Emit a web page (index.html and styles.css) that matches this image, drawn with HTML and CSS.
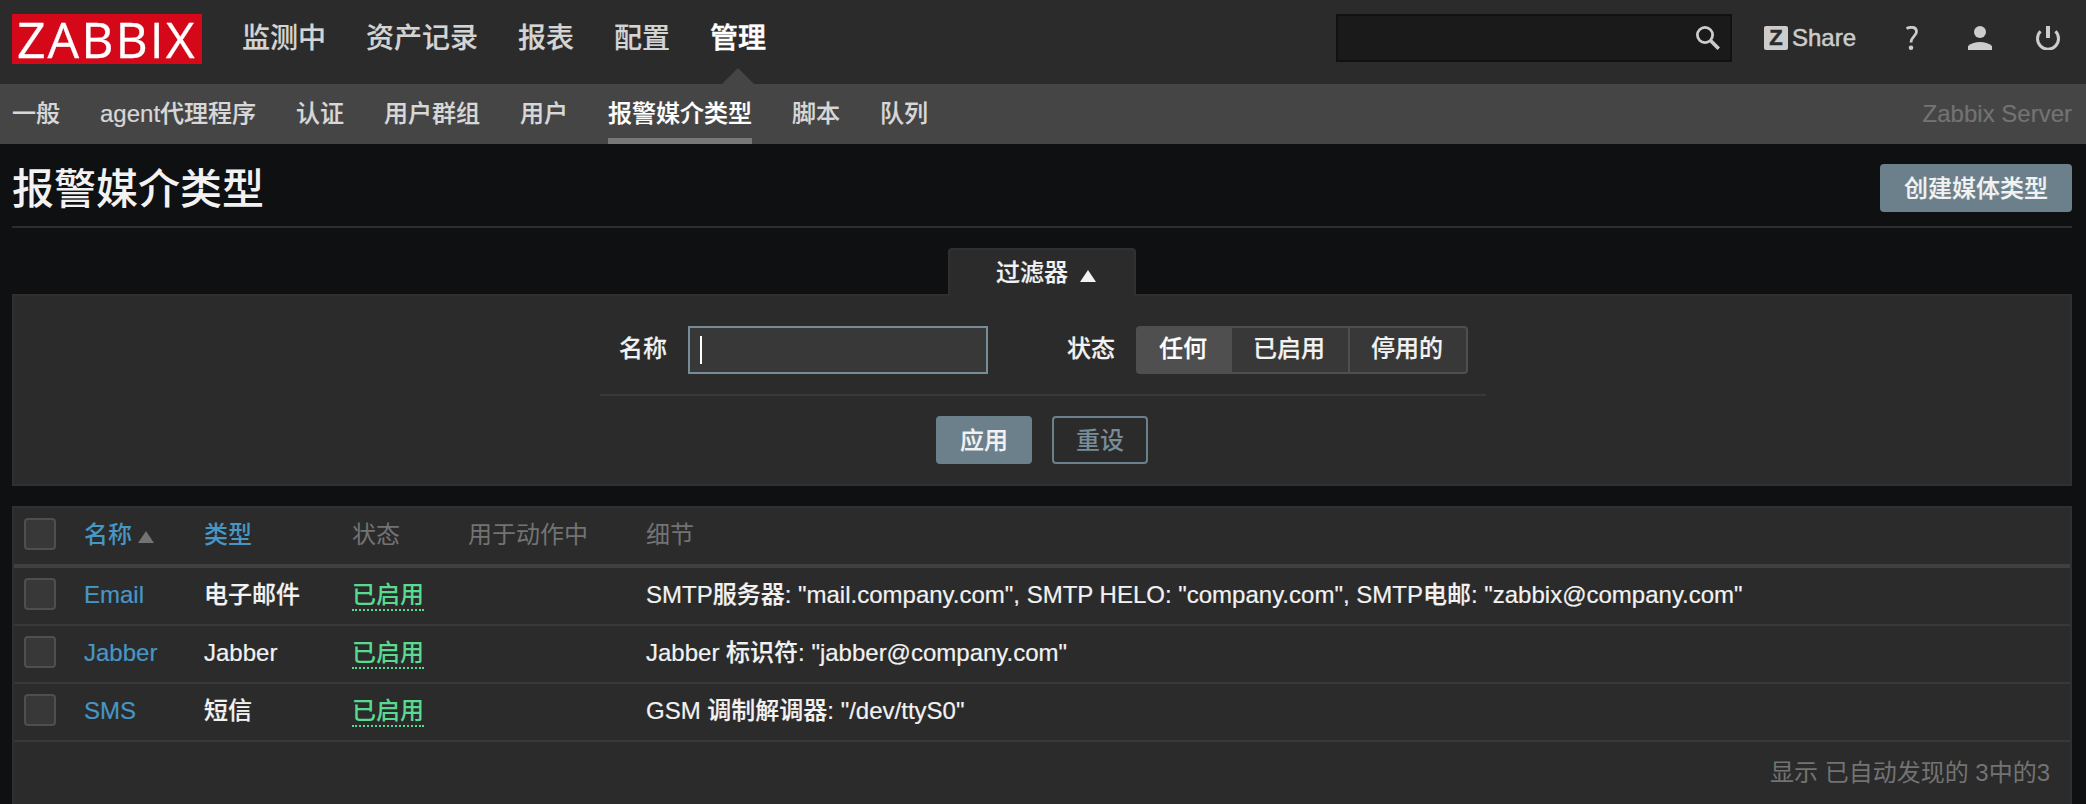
FILE: index.html
```html
<!DOCTYPE html>
<html lang="zh-CN">
<head>
<meta charset="utf-8">
<title>报警媒介类型</title>
<link rel="stylesheet" href="styles.css">
</head>
<body>
<header class="top">
  <a class="logo">ZABBIX</a>
  <nav class="main-nav">
    <a>监测中</a><a>资产记录</a><a>报表</a><a>配置</a><a class="current">管理</a>
  </nav>
  <div class="tools">
    <div class="search"><svg width="24" height="24" viewBox="0 0 24 24" fill="none" stroke="#ccc"><circle cx="9" cy="9" r="7.600" stroke-width="2.800"/><path d="M14.500 14.500L22.700 22.700" stroke-width="3.600"/></svg></div>
    <a class="share"><span class="z">Z</span>Share</a>
    <svg class="help" width="12" height="24" viewBox="0 0 12 24"><path d="M.6 2.600C2 1.700 3.600 1.300 5.500 1.300C8.600 1.300 10.500 3 10.500 5.700C10.500 10 5 10.500 5 16.500" fill="none" stroke="#ccc" stroke-width="2.800"/><circle cx="5" cy="21.700" r="2.300" fill="#ccc"/></svg>
    <svg class="user" width="24" height="24" viewBox="0 0 24 24" fill="#ccc"><circle cx="12" cy="6" r="6"/><path d="M0 24v-4C3 17.300 7.500 16 12 16s9 1.300 12 4v4z"/></svg>
    <svg class="power" width="24" height="24" viewBox="0 0 24 24" fill="none" stroke="#ccc"><path d="M4.500 5.300A10.500 10.500 0 1 0 19.500 5.300" stroke-width="3"/><path d="M12 0v12" stroke-width="4"/></svg>
  </div>
</header>
<nav class="sub-nav">
  <a>一般</a><a>agent代理程序</a><a>认证</a><a>用户群组</a><a>用户</a><a class="current">报警媒介类型</a><a>脚本</a><a>队列</a>
  <span class="server">Zabbix Server</span>
</nav>
<main>
  <div class="title-bar"><h1>报警媒介类型</h1><button class="btn">创建媒体类型</button></div>
  <div class="tab-row"><div class="tab">过滤器<i class="tri"></i></div></div>
  <section class="filter">
    <div class="fields">
      <label>名称</label><div class="input"><i class="caret"></i></div>
      <label class="status">状态</label>
      <div class="segments"><span class="on">任何</span><span>已启用</span><span class="last">停用的</span></div>
    </div>
    <div class="actions"><button class="btn">应用</button><button class="btn alt">重设</button></div>
  </section>
  <section class="list">
    <div class="row head"><i class="check"></i><a>名称<i class="tri sort"></i></a><a>类型</a><span>状态</span><span>用于动作中</span><span>细节</span></div>
    <div class="row"><i class="check"></i><a>Email</a><span>电子邮件</span><span><b class="enabled">已启用</b></span><span></span><span>SMTP服务器: "mail.company.com", SMTP HELO: "company.com", SMTP电邮: "zabbix@company.com"</span></div>
    <div class="row"><i class="check"></i><a>Jabber</a><span>Jabber</span><span><b class="enabled">已启用</b></span><span></span><span>Jabber 标识符: "jabber@company.com"</span></div>
    <div class="row"><i class="check"></i><a>SMS</a><span>短信</span><span><b class="enabled">已启用</b></span><span></span><span>GSM 调制解调器: "/dev/ttyS0"</span></div>
    <div class="foot">显示 已自动发现的 3中的3</div>
  </section>
</main>
</body>
</html>
```
FILE: styles.css
```css
* { box-sizing: border-box; }
body { margin: 0; height: 804px; overflow: hidden; background: #0e1012; color: #f2f2f2; font: 500 24px/28px "Liberation Sans", "Noto Sans CJK SC", sans-serif; -webkit-text-stroke: .2px; }
svg { display: block; flex: none; }
i { font-style: normal; }
.top { height: 84px; padding: 14px 26px 0 12px; background: #2b2b2b; display: flex; align-items: flex-start; }
.logo { width: 190px; height: 50px; padding-left: 5px; background: #d40818; color: #fff; font: 50px/50px "Open Sans", sans-serif; letter-spacing: 2px; white-space: nowrap; -webkit-text-stroke: .3px; }
.main-nav { display: flex; gap: 40px; margin-left: 40px; height: 70px; font-size: 28px; line-height: 49px; color: #d4d4d4; }
.main-nav .current { position: relative; color: #fff; -webkit-text-stroke: .5px; }
.main-nav .current::after { content: ""; position: absolute; left: 12px; bottom: 0; border: 16px solid transparent; border-top-width: 0; border-bottom-color: #454545; }
.tools { margin-left: auto; display: flex; align-items: center; height: 48px; color: #ccc; }
.search { width: 396px; height: 48px; padding: 0 10px; background: #1a1a1a; border: 2px solid #111; display: flex; align-items: center; justify-content: flex-end; }
.share { display: flex; align-items: center; margin-left: 32px; gap: 4px; -webkit-text-stroke: .5px; }
.z { width: 24px; height: 24px; background: #ccc; color: #2b2b2b; border-radius: 2px; font: bold 22px/24px "Liberation Sans", sans-serif; text-align: center; }
.help { margin-left: 50px; }
.user { margin-left: 50px; }
.power { margin-left: 44px; }
.sub-nav { height: 60px; padding: 0 14px 0 12px; background: #454545; color: #d8d8d8; display: flex; gap: 40px; line-height: 59px; }
.sub-nav .current { color: #fff; border-bottom: 6px solid #787878; }
.server { margin-left: auto; color: #737373; }
main { padding: 0 14px 0 12px; }
.title-bar { height: 84px; border-bottom: 2px solid #2e2e2e; display: flex; justify-content: space-between; align-items: flex-start; padding-top: 20px; }
h1 { margin: 0; font-size: 42px; line-height: 52px; font-weight: 500; -webkit-text-stroke: 0; }
.btn { height: 48px; padding: 1px 22px 0; border: 2px solid #6b808b; border-radius: 4px; background: #6b808b; color: #f2f2f2; font: inherit; line-height: 43px; }
.btn.alt { background: transparent; color: #768d99; -webkit-text-stroke: 0; }
.tab-row { display: flex; justify-content: center; padding-top: 20px; }
.tab { position: relative; width: 188px; height: 48px; margin-bottom: -2px; padding-left: 46px; border: 2px solid #303030; border-bottom: 0; border-radius: 4px 4px 0 0; background: #2b2b2b; line-height: 46px; display: flex; align-items: center; gap: 12px; }
.tri { border: 8px solid transparent; border-top: 0; border-bottom: 12px solid #f2f2f2; margin-top: 5px; }
.filter { height: 192px; border: 2px solid #303030; background: #2b2b2b; padding-top: 30px; display: flex; flex-direction: column; align-items: center; }
.fields { width: 886px; height: 70px; margin-left: 2px; padding-left: 19px; border-bottom: 2px solid #383838; display: flex; line-height: 45px; }
.input { width: 300px; height: 48px; margin-left: 21px; padding: 8px 10px; border: 2px solid #768d99; background: #383838; }
.caret { display: block; width: 2px; height: 28px; background: #fff; }
.status { margin-left: 79px; }
.segments { display: flex; height: 48px; margin-left: 21px; border: 2px solid #4f4f4f; border-radius: 4px; background: #383838; line-height: 42px; }
.segments span { padding: 0 23px 0 21px; }
.segments .on { background: #4f4f4f; padding-right: 25px; color: #fff; }
.segments .last { border-left: 2px solid #4f4f4f; }
.actions { display: flex; gap: 20px; margin-top: 20px; }
.list { height: 298px; margin-top: 20px; border: 2px solid #303030; border-bottom: 0; background: #2b2b2b; }
.row { display: grid; grid-template-columns: 70px 120px 148px 116px 178px 1fr; height: 58px; border-bottom: 2px solid #383838; line-height: 54px; }
.row.head { height: 60px; border-bottom: 4px solid #404040; color: #737373; font-weight: 400; -webkit-text-stroke: 0; }
.row a { color: #4796c4; font-weight: 500; }
.check { width: 32px; height: 32px; margin: 10px; border: 2px solid #4f4f4f; border-radius: 4px; background: #383838; }
.sort { display: inline-block; border-bottom-color: #737373; margin: 0 0 0 6px; }
.enabled { display: inline-block; line-height: 28px; border-bottom: 2px dotted #59db8f; color: #59db8f; font-weight: 500; -webkit-text-stroke: 0; }
.foot { padding-right: 20px; text-align: right; line-height: 62px; color: #737373; font-weight: 400; -webkit-text-stroke: 0; }
```
